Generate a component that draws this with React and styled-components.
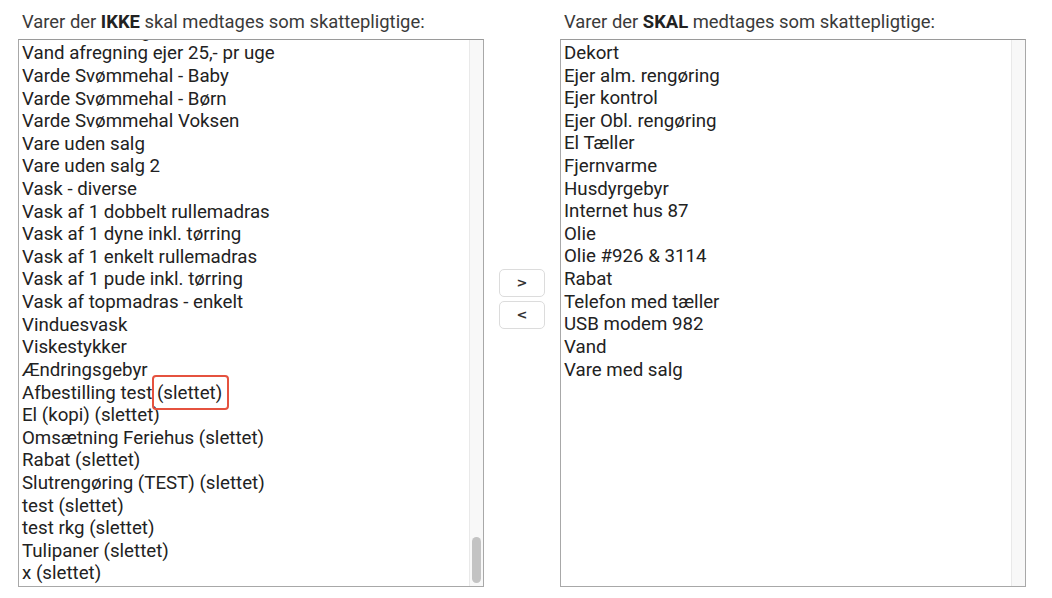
import React from "react";
import styled, { createGlobalStyle } from "styled-components";

const Global = createGlobalStyle`
  html, body { margin: 0; padding: 0; background: #fff; }
  body { font-family: Roboto, "Liberation Sans", Arial, sans-serif; color: #222; }
`;

const Page = styled.div`
  display: flex;
  align-items: center;
  padding: 10px 26px 0 18px;
  width: 1052px;
  box-sizing: border-box;
`;

const Column = styled.div`
  display: flex;
  flex-direction: column;
  width: 466px;
`;

const Title = styled.div`
  font-size: 18.4px;
  line-height: 23px;
  color: #3a3a3a;
  padding-left: 4px;
  margin-bottom: 6px;
  white-space: nowrap;
  b { font-weight: 700; color: #222; }
`;

const ListBox = styled.div`
  display: flex;
  height: 548px;
  border: 1px solid #a8a8a8;
  border-top-color: #9a9a9a;
  box-sizing: border-box;
  background: #fff;
`;

const Items = styled.div`
  flex: 1;
  display: flex;
  flex-direction: column;
  justify-content: ${(p) => (p.$bottom ? "flex-end" : "flex-start")};
  overflow: hidden;
  padding: ${(p) => (p.$bottom ? "0 0 1px 3px" : "2px 0 0 3px")};
`;

const Item = styled.div`
  flex: none;
  font-size: 18.7px;
  line-height: 22.62px;
  height: 22.62px;
  white-space: nowrap;
  color: #222;
`;

const Track = styled.div`
  width: 14px;
  flex: none;
  background: #f8f8f8;
  border-left: 1px solid #e9e9e9;
  display: flex;
  flex-direction: column;
  align-items: center;
  padding-bottom: 3px;
  box-sizing: border-box;
`;

const Thumb = styled.div`
  margin-top: auto;
  width: 9px;
  height: 46px;
  border-radius: 5px;
  background: #c3c3c3;
`;

const Middle = styled.div`
  width: 76px;
  display: flex;
  flex-direction: column;
  align-items: center;
  gap: 4px;
`;

const MoveButton = styled.button`
  width: 46px;
  height: 28px;
  background: #fff;
  border: 1px solid #dcdcdc;
  border-radius: 5px;
  font-family: "DejaVu Sans", "Liberation Sans", sans-serif;
  font-size: 13px;
  font-weight: 700;
  color: #333;
  padding: 0;
  display: flex;
  align-items: center;
  justify-content: center;
`;

const Highlight = styled.span`
  position: relative;
  &::after {
    content: "";
    position: absolute;
    left: -5px;
    right: -7px;
    top: -7px;
    bottom: -6px;
    border: 2px solid #e5523f;
    border-radius: 4px;
    pointer-events: none;
  }
`;

const leftItems = [
  "Vand aflæsning",
  "Vand afregning ejer 25,- pr uge",
  "Varde Svømmehal - Baby",
  "Varde Svømmehal - Børn",
  "Varde Svømmehal Voksen",
  "Vare uden salg",
  "Vare uden salg 2",
  "Vask - diverse",
  "Vask af 1 dobbelt rullemadras",
  "Vask af 1 dyne inkl. tørring",
  "Vask af 1 enkelt rullemadras",
  "Vask af 1 pude inkl. tørring",
  "Vask af topmadras - enkelt",
  "Vinduesvask",
  "Viskestykker",
  "Ændringsgebyr",
  "__HIGHLIGHT__",
  "El (kopi) (slettet)",
  "Omsætning Feriehus (slettet)",
  "Rabat (slettet)",
  "Slutrengøring (TEST) (slettet)",
  "test (slettet)",
  "test rkg (slettet)",
  "Tulipaner (slettet)",
  "x (slettet)",
];

const rightItems = [
  "Dekort",
  "Ejer alm. rengøring",
  "Ejer kontrol",
  "Ejer Obl. rengøring",
  "El Tæller",
  "Fjernvarme",
  "Husdyrgebyr",
  "Internet hus 87",
  "Olie",
  "Olie #926 & 3114",
  "Rabat",
  "Telefon med tæller",
  "USB modem 982",
  "Vand",
  "Vare med salg",
];

export default function App() {
  return (
    <>
      <Global />
      <Page>
        <Column>
          <Title>
            Varer der <b>IKKE</b> skal medtages som skattepligtige:
          </Title>
          <ListBox>
            <Items $bottom>
              {leftItems.map((t, i) =>
                t === "__HIGHLIGHT__" ? (
                  <Item key={i}>
                    Afbestilling test <Highlight>(slettet)</Highlight>
                  </Item>
                ) : (
                  <Item key={i}>{t}</Item>
                )
              )}
            </Items>
            <Track>
              <Thumb />
            </Track>
          </ListBox>
        </Column>
        <Middle>
          <MoveButton>&gt;</MoveButton>
          <MoveButton>&lt;</MoveButton>
        </Middle>
        <Column>
          <Title>
            Varer der <b>SKAL</b> medtages som skattepligtige:
          </Title>
          <ListBox>
            <Items>
              {rightItems.map((t, i) => (
                <Item key={i}>{t}</Item>
              ))}
            </Items>
            <Track />
          </ListBox>
        </Column>
      </Page>
    </>
  );
}
